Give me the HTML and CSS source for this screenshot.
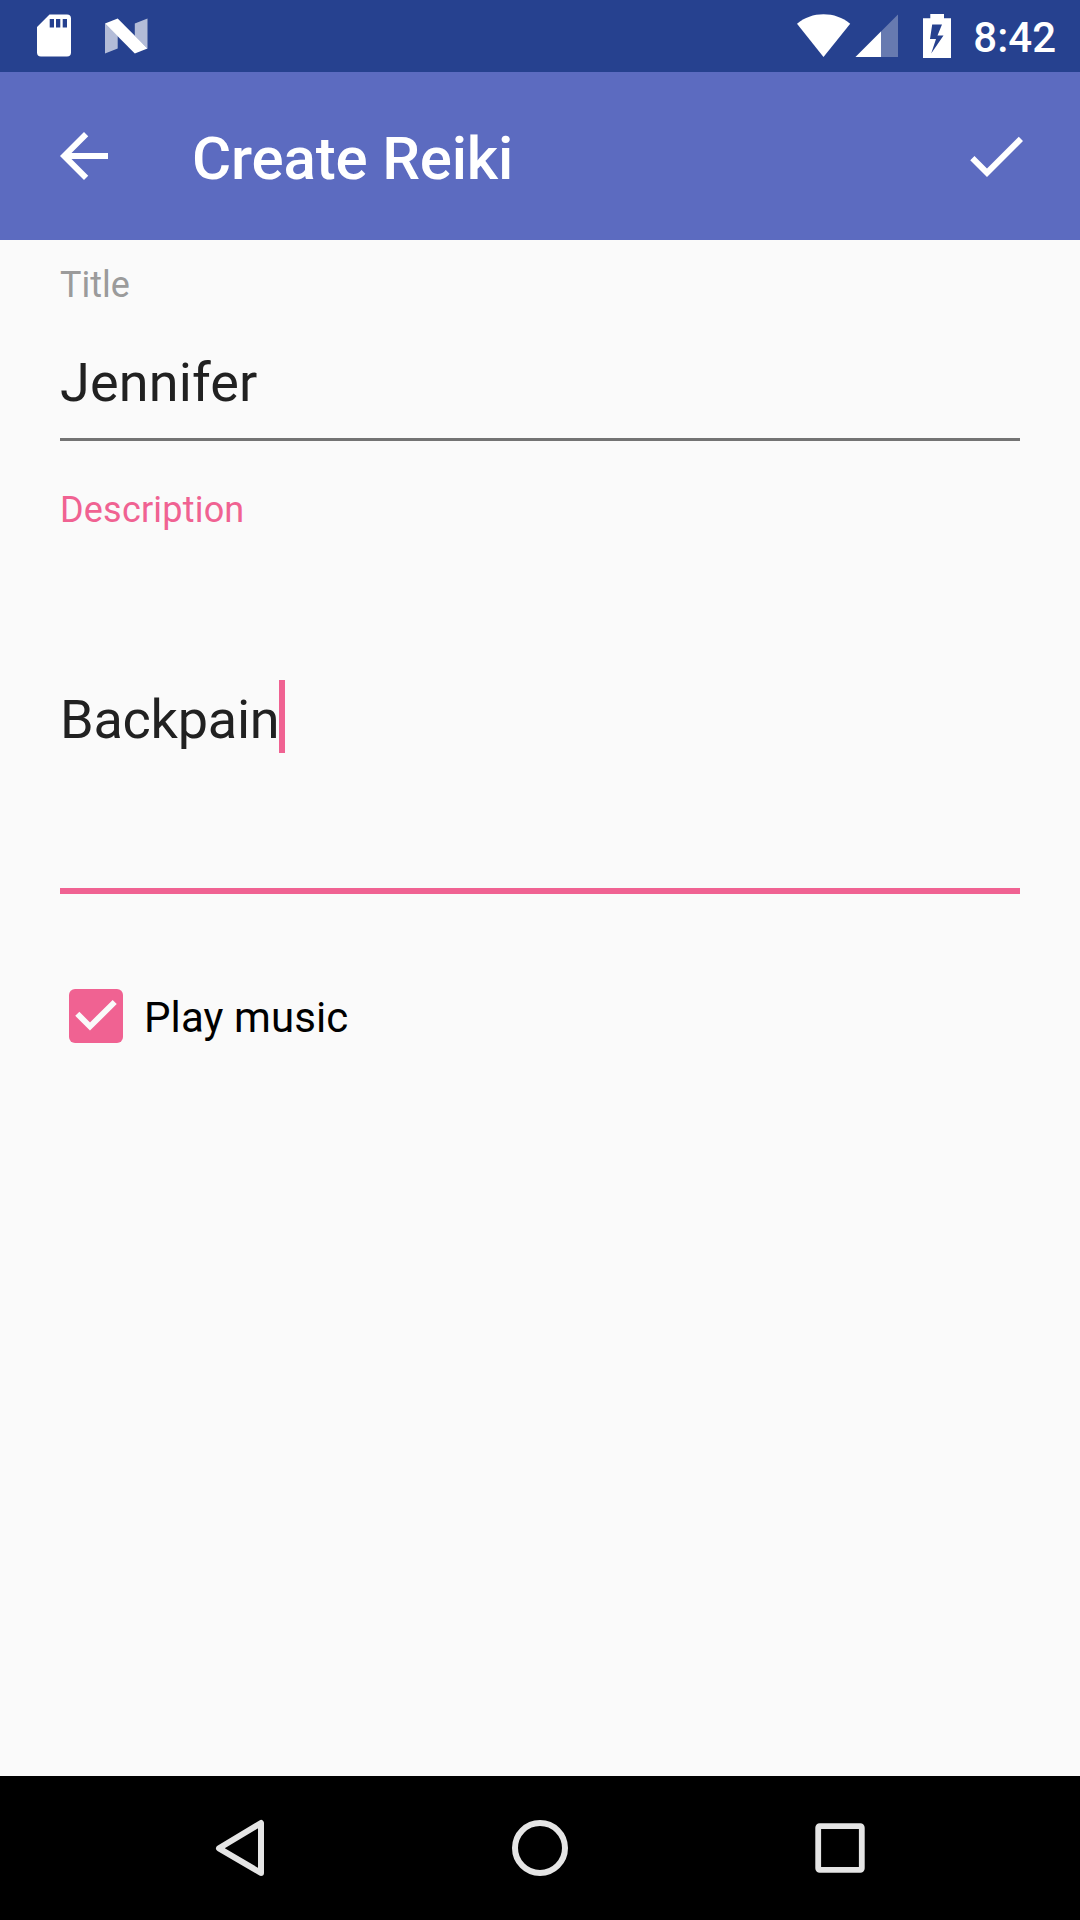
FILE: index.html
```html
<!DOCTYPE html>
<html lang="en">
<head>
<meta charset="utf-8">
<title>Create Reiki</title>
<link rel="stylesheet" href="styles.css">
</head>
<body>
<div class="screen">
  <div class="status-bar">
    <div class="status-group status-left">
      <svg class="sd-icon" width="34" height="43" viewBox="0 0 34 43">
        <path fill="#fff" fill-rule="evenodd" d="M12.5.5H30q4 0 4 4V38.500q0 4-4 4H4q-4 0-4-4V13ZM12.700 5v8.500h4.300V5ZM19 5v8.500h4.300V5ZM25.700 5v8.500h4.300V5Z"/>
      </svg>
      <svg class="nougat-icon" width="43" height="36" viewBox="0 0 43 36">
        <path fill="#fff" fill-opacity=".65" d="M0 5.500 12.700 18V30.500L0 35.500ZM42.500.5V30.500L29.800 18V5.500Z"/>
        <path fill="#fff" d="M0 5.500 12.700.5 42.500 30.500 29.800 35.500Z"/>
      </svg>
    </div>
    <div class="status-group">
      <svg width="54" height="43" viewBox="0 0 54 43">
        <path fill="#fff" d="M26.500 43 0 9.700C7.700 3.500 16.500.3 26.500.3S45.500 3.500 53.200 9.700Z"/>
      </svg>
      <svg class="signal-icon" width="43" height="43" viewBox="0 0 43 43">
        <path fill="#fff" fill-opacity=".3" d="M.5 43 43 .5V43Z"/>
        <path fill="#fff" d="M.5 43 26 17.500V43Z"/>
      </svg>
      <svg class="battery-icon" width="28" height="44" viewBox="0 0 28 44">
        <path fill="#fff" fill-rule="evenodd" d="M7.300 0H21V4.300H28V44H0V4.300H7.300ZM9.200 10.500 7 25h6L8.200 39.500 20.500 21.500H14.500L19 10.500Z"/>
      </svg>
      <span class="clock">8:42</span>
    </div>
  </div>

  <header class="app-bar">
    <svg width="72" height="72" viewBox="0 0 24 24"><path fill="#fff" d="M20 11H7.830l5.590-5.590L12 4l-8 8 8 8 1.410-1.410L7.830 13H20z"/></svg>
    <h1 class="app-title">Create Reiki</h1>
    <svg width="72" height="72" viewBox="0 0 24 24"><path fill="#fff" d="M9 16.170 4.830 12l-1.420 1.410L9 19 21 7l-1.410-1.410z"/></svg>
  </header>

  <main class="form">
    <div class="field">
      <div class="label">Title</div>
      <div class="value">Jennifer</div>
    </div>
    <div class="field field-active">
      <div class="label">Description</div>
      <div class="value value-multiline"><span>Backpain</span><span class="caret"></span></div>
    </div>
    <div class="check-row">
      <span class="checkbox">
        <svg width="54" height="54" viewBox="0 0 54 54"><path fill="none" stroke="#fafafa" stroke-width="5.800" d="m8.300 24.800 12.700 12.700L45.700 13"/></svg>
      </span>
      <span class="check-label">Play music</span>
    </div>
  </main>

  <nav class="nav-bar">
    <svg width="60" height="60" viewBox="0 0 60 60"><path fill="none" stroke="#e5e5e5" stroke-width="6" stroke-linejoin="round" d="M9 30.300 51 5V55Z"/></svg>
    <svg width="60" height="60" viewBox="0 0 60 60"><circle cx="30" cy="30" r="25" fill="none" stroke="#e5e5e5" stroke-width="6"/></svg>
    <svg width="60" height="60" viewBox="0 0 60 60"><rect x="8.200" y="8.200" width="43.600" height="43.600" rx="1.500" fill="none" stroke="#e5e5e5" stroke-width="5.800"/></svg>
  </nav>
</div>
</body>
</html>
```

FILE: styles.css
```css
* {
  box-sizing: border-box;
}

body {
  margin: 0;
  background: #fafafa;
  font-family: Roboto, sans-serif;
}

svg {
  display: block;
  flex: none;
}

.screen {
  display: flex;
  flex-direction: column;
  width: 1080px;
  height: 1920px;
}

.status-bar {
  display: flex;
  justify-content: space-between;
  height: 72px;
  padding: 14px 24px 0 37px;
  background: #26418f;
}

.status-group {
  display: flex;
  align-items: flex-start;
}

.status-left {
  gap: 34px;
}

.nougat-icon {
  margin-top: 4px;
}

.signal-icon {
  margin-left: 4px;
}

.battery-icon {
  margin-left: 25px;
}

.clock {
  margin: -1px 0 0 22px;
  color: #fff;
  font-size: 42px;
  font-weight: 500;
  line-height: 50px;
}

.app-bar {
  display: flex;
  align-items: center;
  height: 168px;
  padding: 0 48px;
  background: #5c6bc0;
}

.app-title {
  flex: 1;
  margin: 0;
  padding: 5px 0 0 72px;
  color: #fff;
  font-size: 60px;
  font-weight: 500;
  line-height: 70px;
  letter-spacing: -0.17px;
}

.form {
  flex: 1;
  padding: 24px 60px 0;
}

.field {
  height: 177px;
  margin-bottom: 48px;
  border-bottom: 3px solid #737373;
}

.field-active {
  height: 405px;
  margin-bottom: 95px;
  border-bottom: 6px solid #f06292;
}

.label {
  color: #9b9b9b;
  font-size: 36px;
  line-height: 42px;
}

.field-active .label {
  color: #f06292;
  letter-spacing: 0.2px;
}

.value {
  padding-top: 45px;
  color: #212121;
  font-size: 54px;
  line-height: 64px;
  letter-spacing: 0.15px;
}

.value-multiline {
  display: flex;
  padding-top: 157px;
  letter-spacing: -0.23px;
}

.caret {
  width: 6px;
  height: 73px;
  margin-top: -8px;
  background: #f06292;
}

.check-row {
  display: flex;
  align-items: center;
  gap: 21px;
  padding-left: 9px;
}

.checkbox {
  border-radius: 6px;
  background: #f06292;
}

.check-label {
  padding-top: 4px;
  color: #000;
  font-size: 42px;
  line-height: 50px;
  letter-spacing: 0.1px;
}

.nav-bar {
  display: flex;
  align-items: center;
  justify-content: center;
  gap: 240px;
  height: 144px;
  background: #000;
}
```
